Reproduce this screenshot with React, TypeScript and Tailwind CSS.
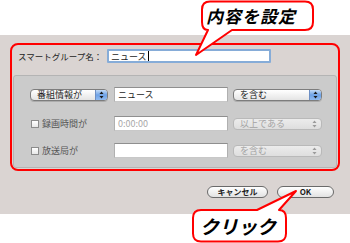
import React from "react";

function Arrows({ disabled }: { disabled?: boolean }) {
  const fill = disabled ? "#9a9a9a" : "#1a1a1a";
  return (
    <svg width="5" height="8" viewBox="0 0 5 8">
      <path d="M2.5 0.5 L4.5 3 H0.5 Z" fill={fill} />
      <path d="M2.5 7.5 L4.5 5 H0.5 Z" fill={fill} />
    </svg>
  );
}

interface PopupProps {
  label: string;
  width: string;
  disabled?: boolean;
}

function Popup({ label, width, disabled }: PopupProps) {
  if (disabled) {
    return (
      <div
        className={`flex h-[12px] ${width} items-center overflow-hidden rounded-[4px] border border-[#b9b9b9] bg-[linear-gradient(#ececec,#dedede)]`}
      >
        <span className="flex-1 whitespace-nowrap pl-[6px] text-[9px] leading-none text-[#a3a3a3]">
          {label}
        </span>
        <div className="flex h-full w-[13px] items-center justify-center">
          <Arrows disabled />
        </div>
      </div>
    );
  }
  return (
    <div
      className={`flex h-[12px] ${width} items-center overflow-hidden rounded-[4px] border border-[#7d7d7d] bg-[linear-gradient(#ffffff,#e4e4e4)] shadow-[0_1px_0_rgba(0,0,0,0.15)]`}
    >
      <span className="flex-1 whitespace-nowrap pl-[6px] text-[9px] leading-none text-[#1c1c1c]">
        {label}
      </span>
      <div className="flex h-full w-[12px] items-center justify-center border-l border-[#6d8fc4] bg-[linear-gradient(#c3dbf7,#6ea2e6_50%,#8fbaf0)]">
        <Arrows />
      </div>
    </div>
  );
}

function Field({ text, muted }: { text?: string; muted?: boolean }) {
  return (
    <div className="flex h-[15px] w-[114px] items-center border border-t-[#8f8f8f] border-x-[#b0b0b0] border-b-[#c8c8c8] bg-white pl-[3px]">
      <span
        className={`text-[9px] leading-none ${muted ? "text-[#a8a8a8]" : "text-[#1c1c1c]"}`}
      >
        {text}
      </span>
    </div>
  );
}

function CheckRow({ label }: { label: string }) {
  return (
    <div className="flex w-[84px] items-center gap-[3px] pl-[1px]">
      <div className="h-[8px] w-[8px] border border-[#8c8c8c] bg-[linear-gradient(#ffffff,#e8e8e8)]" />
      <span className="whitespace-nowrap text-[9px] leading-none text-[#555555]">
        {label}
      </span>
    </div>
  );
}

function PillButton({ label, width }: { label: string; width: string }) {
  return (
    <div
      className={`flex h-[12px] ${width} items-center justify-center rounded-full border border-[#6a6a6a] bg-[linear-gradient(#ffffff,#e2e2e2)]`}
    >
      <span className="text-[8px] font-bold leading-none text-[#1c1c1c]">
        {label}
      </span>
    </div>
  );
}

export default function App() {
  return (
    <div className="relative h-[243px] w-[350px] overflow-hidden bg-white font-['Noto_Sans_CJK_JP',sans-serif]">
      <div className="h-[35px]" />
      <div className="h-[179px] bg-[#dad4d2] px-[10px] pt-[8px]">
        <div className="flex h-[128px] flex-col rounded-[8px] border-2 border-[#ff0000] px-[1px] pb-[1px] pt-[4px]">
          <div className="flex h-[14px] items-center pl-[5px]">
            <span className="w-[89px] shrink-0 whitespace-nowrap text-[8.5px] leading-none text-[#1c1c1c]">
              スマートグループ名：
            </span>
            <div className="flex h-[14px] w-[164px] items-center rounded-[1px] border-2 border-[#86acd8] bg-white pl-[2px]">
              <span className="text-[9px] leading-none text-[#1c1c1c]">
                ニュース
              </span>
              <span className="ml-[1px] h-[10px] w-px bg-black" />
            </div>
          </div>
          <div className="mt-[12px] flex flex-1 flex-col rounded-[3px] border border-[#b4b4b4] bg-[#cbcbcb] pl-[16px] pt-[11px]">
            <div className="flex h-[15px] items-center">
              <div className="w-[84px]">
                <Popup label="番組情報が" width="w-[78px]" />
              </div>
              <Field text="ニュース" />
              <div className="ml-[5px]">
                <Popup label="を含む" width="w-[89px]" />
              </div>
            </div>
            <div className="mt-[14px] flex h-[15px] items-center">
              <CheckRow label="録画時間が" />
              <Field text="0:00:00" muted />
              <div className="ml-[5px]">
                <Popup label="以上である" width="w-[89px]" disabled />
              </div>
            </div>
            <div className="mt-[12px] flex h-[15px] items-center">
              <CheckRow label="放送局が" />
              <Field />
              <div className="ml-[5px]">
                <Popup label="を含む" width="w-[89px]" disabled />
              </div>
            </div>
          </div>
        </div>
        <div className="mt-[15px] flex justify-end gap-[9px] pr-[6px]">
          <PillButton label="キャンセル" width="w-[61px]" />
          <PillButton label="OK" width="w-[57px]" />
        </div>
      </div>

      <svg
        className="pointer-events-none absolute left-0 top-0"
        width="350"
        height="243"
        viewBox="0 0 350 243"
      >
        <path
          d="M210 1.5 H305 Q313 1.5 313 9.5 V22 Q313 30 305 30 H232 L196 55 L208 30 Q202 30 202 22 V9.5 Q202 1.5 210 1.5 Z"
          fill="#ffffff"
          stroke="#ff0000"
          strokeWidth="2"
          strokeLinejoin="round"
        />
        <path
          d="M201 210 H257 L296 191 L279 210 Q286 210 286 218 V233.5 Q286 241.5 278 241.5 H201 Q193 241.5 193 233.5 V218 Q193 210 201 210 Z"
          fill="#ffffff"
          stroke="#ff0000"
          strokeWidth="2"
          strokeLinejoin="round"
        />
      </svg>
      <div className="absolute left-[206px] top-[5px] text-[17px] font-bold italic leading-[22px] tracking-[1px] text-black">
        内容を設定
      </div>
      <div className="absolute left-[200px] top-[214px] text-[19px] font-bold italic leading-[24px] text-black">
        クリック
      </div>
    </div>
  );
}
